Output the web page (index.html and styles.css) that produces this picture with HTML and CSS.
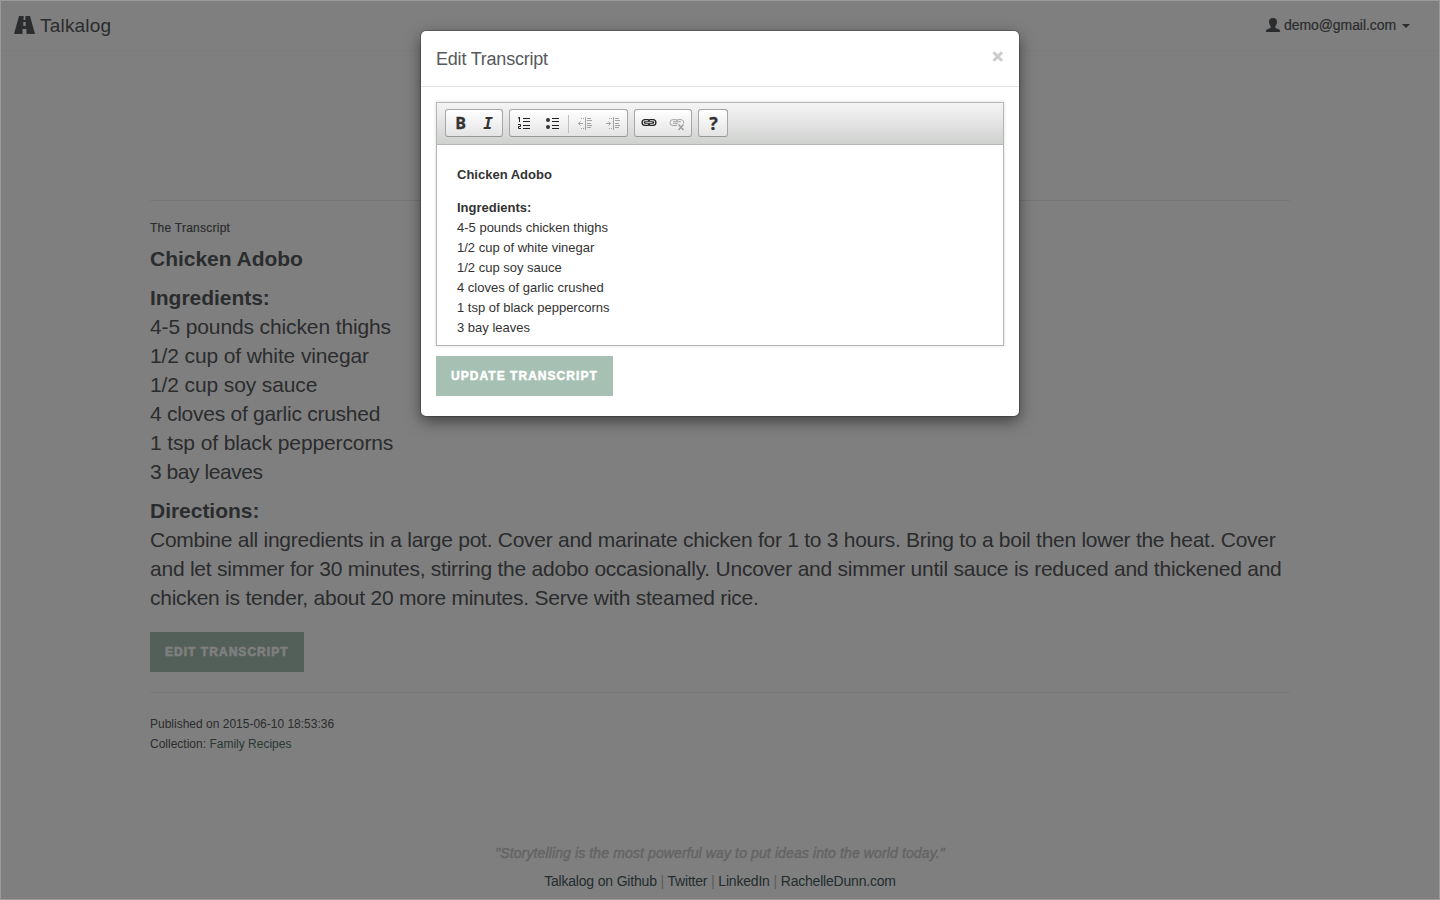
FILE: index.html
```html
<!DOCTYPE html>
<html lang="en">
<head>
<meta charset="utf-8">
<title>Talkalog</title>
<link rel="stylesheet" href="styles.css">
</head>
<body>
<div class="page">
  <nav class="navbar">
    <a class="brand">
      <svg class="road" width="21" height="18" viewBox="0 0 21 18"><path fill="currentColor" fill-rule="evenodd" d="M5 0h11l5 18h-8.500v-5H8.500v5H0zM9.600 0v4h1.800V0zM9.300 6v4h2.400V6z"/></svg>
      <span>Talkalog</span>
    </a>
    <a class="user">
      <svg width="14" height="14" viewBox="0 0 14 14"><path fill="currentColor" d="M7 0c2.800 0 4 1.500 4 3.800 0 2-.8 3.400-1.700 4.600v1c0 .5.2.7.7.9l2.800 1c.8.400 1.200.8 1.200 2.700H0c0-1.900.4-2.300 1.200-2.700l2.800-1c.5-.2.700-.4.700-.9v-1C3.800 7.200 3 5.800 3 3.800 3 1.500 4.200 0 7 0z"/></svg>
      <span class="email">demo@gmail.com</span>
      <span class="caret"></span>
    </a>
  </nav>

  <main class="container">
    <p class="label">The Transcript</p>
    <div class="transcript">
      <p><strong>Chicken Adobo</strong></p>
      <p><strong>Ingredients:</strong><br>4-5 pounds chicken thighs<br>1/2 cup of white vinegar<br>1/2 cup soy sauce<br><span class="snug">4 cloves of garlic crushed</span><br>1 tsp of black peppercorns<br><span class="tight">3 bay leaves</span></p>
      <p class="directions"><strong>Directions:</strong><br><span class="snug">Combine all ingredients in a large pot. Cover and marinate chicken for 1 to 3 hours. Bring to a boil then lower the heat. Cover</span><br>and let simmer for 30 minutes, stirring the adobo occasionally. Uncover and simmer until sauce is reduced and thickened and<br>chicken is tender, about 20 more minutes. Serve with steamed rice.</p>
    </div>
    <button class="btn">Edit Transcript</button>
    <div class="meta">Published on 2015-06-10 18:53:36<br>Collection: <a>Family Recipes</a></div>
  </main>

  <footer class="footer">
    <p class="quote">"Storytelling is the most powerful way to put ideas into the world today."</p>
    <p class="links"><a>Talkalog on Github</a> | <a>Twitter</a> | <a>LinkedIn</a> | <a>RachelleDunn.com</a></p>
  </footer>

  <div class="backdrop">
    <section class="modal">
      <header class="modal-header">
        <h4>Edit Transcript</h4>
        <svg class="close" width="12" height="11" viewBox="0 0 12 11"><path d="M1.500 1.200l8.500 8.600M10 1.200L1.500 9.800" stroke="#ccc" stroke-width="3"/></svg>
      </header>
      <div class="modal-body">
        <div class="editor">
          <div class="toolbar">
            <div class="group">
              <span class="tool bold">B</span>
              <span class="tool italic">I</span>
            </div>
            <div class="group">
              <span class="tool"><svg width="16" height="16" viewBox="0 0 16 16"><path fill="none" stroke="#222" d="M3.500 2v5M2 3h2M2 9.500h2.500v2h-2v2H5"/><path stroke="#222" d="M7 3.500h7M7 6.500h7M7 10.500h7M7 13.500h7"/></svg></span>
              <span class="tool"><svg width="16" height="16" viewBox="0 0 16 16"><circle cx="4" cy="5" r="2" fill="#333"/><circle cx="4" cy="12" r="2" fill="#333"/><path stroke="#222" d="M8 3.500h7M8 6.500h7M8 10.500h7M8 13.500h7"/></svg></span>
              <span class="separator"></span>
              <span class="tool disabled"><svg width="16" height="16" viewBox="0 0 16 16"><path fill="none" stroke="#444" d="M8.500 2v13M10 3.500h4M10 5.500h5M10 8.500h4M10 10.500h5M10 12.500h4M1 8.500h5M3.500 6.500l-2 2 2 2M4 3.500h1M6 3.500h1M4 13.500h1M6 13.500h1"/></svg></span>
              <span class="tool disabled"><svg width="16" height="16" viewBox="0 0 16 16"><path fill="none" stroke="#444" d="M8.500 2v13M10 3.500h4M10 5.500h5M10 8.500h4M10 10.500h5M10 12.500h4M1 8.500h5M3.500 6.500l2 2-2 2M4 3.500h1M6 3.500h1M4 13.500h1M6 13.500h1"/></svg></span>
            </div>
            <div class="group">
              <span class="tool"><svg width="16" height="16" viewBox="0 0 16 16"><g fill="none"><g stroke="#222" stroke-width="1.300"><path d="M8.500 6.200A2 2 0 0 0 7 4.600H4a2.900 2.900 0 0 0 0 5.800h3a2 2 0 0 0 1.500-1.600M7.500 6.200A2 2 0 0 1 9 4.600h3a2.900 2.900 0 0 1 0 5.800H9a2 2 0 0 1-1.500-1.600"/></g><path d="M4 7.500h8" stroke="#222" stroke-width="2.400" stroke-linecap="round"/><path d="M4.500 7.500h7" stroke="#ddd" stroke-width=".8"/></g></svg></span>
              <span class="tool disabled"><svg width="16" height="16" viewBox="0 0 16 16"><g fill="none" stroke="#444"><path d="M8 10.500H4A2.900 2.900 0 0 1 4 4.600h3a2 2 0 0 1 1.500 1.600M7.500 6.200A2 2 0 0 1 9 4.600h3a2.900 2.900 0 0 1 2.500 4"/><path d="M4 6.700h8M4 8.400h5"/><path stroke-width="1.600" d="M9.500 9.500l5 5.500M14.500 9.500l-5 5.500"/></g></svg></span>
            </div>
            <div class="group">
              <span class="tool help">?</span>
            </div>
          </div>
          <div class="content">
            <p><strong>Chicken Adobo</strong></p>
            <p><strong>Ingredients:</strong><br>4-5 pounds chicken thighs<br>1/2 cup of white vinegar<br>1/2 cup soy sauce<br>4 cloves of garlic crushed<br>1 tsp of black peppercorns<br>3 bay leaves</p>
          </div>
        </div>
        <button class="btn">Update Transcript</button>
      </div>
    </section>
  </div>
</div>
</body>
</html>
```
FILE: styles.css
```css
* { box-sizing: border-box; }
body { margin: 0; background: #9a9a9a; font-family: "Liberation Sans", Arial, sans-serif; }
p, h4 { margin: 0; }

.page {
  position: relative;
  display: flex;
  flex-direction: column;
  width: 1438px;
  height: 898px;
  margin: 1px;
  background: #fff;
  color: #56595c;
  overflow: hidden;
}

.navbar {
  display: flex;
  justify-content: space-between;
  height: 50px;
  padding: 0 29px 0 13px;
  border-bottom: 1px solid #f8f8f8;
}
.brand, .user { display: flex; align-items: center; }
.brand { gap: 5px; padding-top: 1px; font-size: 19px; line-height: 20px; letter-spacing: .2px; }
.road { margin-top: -2px; }
.user { gap: 4px; padding-bottom: 1px; font-size: 14px; letter-spacing: -.07px; }
.user svg { margin-top: -1px; }
.email { -webkit-text-stroke: .2px; }
.caret { margin: 2px 0 0 2px; border: 4px solid transparent; border-top-color: currentColor; border-bottom: 0; }

.container {
  flex: 1;
  width: 1140px;
  margin: 149px 0 0 149px;
  border-top: 1px solid #eee;
}
.label { margin-top: 17px; font-size: 12px; line-height: 20px; letter-spacing: .25px; -webkit-text-stroke: .2px; }
.transcript { margin-top: 6px; font-size: 21px; line-height: 29px; letter-spacing: -.12px; white-space: nowrap; }
.transcript p { margin-bottom: 10px; }
.transcript strong { letter-spacing: -.03px; }
.transcript .directions { margin-bottom: 20px; letter-spacing: -.24px; }
.snug { letter-spacing: -.265px; }
.tight { letter-spacing: -.45px; }

.btn {
  display: block;
  height: 40px;
  padding: 0 15px;
  border: 0;
  background: #a7c0b4;
  color: #fff;
  font: bold 12px/40px "Liberation Sans", Arial, sans-serif;
  letter-spacing: 1.04px;
  text-transform: uppercase;
  white-space: nowrap;
  -webkit-text-stroke: .5px;
}
.meta { margin-top: 20px; padding-top: 21px; border-top: 1px solid #eee; font-size: 12px; line-height: 20px; }
.meta a { color: #52706a; }

.footer { padding-bottom: 8px; text-align: center; font-size: 14px; color: #b8b8b8; white-space: nowrap; }
.quote { line-height: 20px; margin-bottom: 8px; font-style: italic; letter-spacing: .12px; color: #c8c8c8; -webkit-text-stroke: .4px; }
.links { line-height: 20px; letter-spacing: -.2px; word-spacing: .1px; }
.links a { color: #485a5c; }

.backdrop {
  position: absolute;
  inset: 0;
  display: flex;
  align-items: flex-start;
  justify-content: center;
  padding-top: 30px;
  background: rgba(0, 0, 0, .5);
}
.modal { width: 598px; height: 385px; border-radius: 5px; background: #fff; box-shadow: 0 0 0 1px rgba(0, 0, 0, .2), 0 5px 15px rgba(0, 0, 0, .5); }
.modal-header {
  display: flex;
  justify-content: space-between;
  height: 56px;
  padding: 15px 15px 0 15px;
  border-bottom: 1px solid #e5e5e5;
}
.modal-header h4 { font-weight: normal; font-size: 18px; line-height: 26px; letter-spacing: -.21px; }
.close { margin-top: 5px; }
.modal-body { padding: 15px; }

.editor { height: 244px; margin-bottom: 10px; border: 1px solid #b6b6b6; box-shadow: 0 0 3px rgba(0, 0, 0, .15); overflow: hidden; }
.toolbar {
  display: flex;
  gap: 6px;
  height: 42px;
  padding: 6px 8px;
  border-bottom: 1px solid #b6b6b6;
  background: linear-gradient(#f5f5f5, #cfd1cf);
}
.group { display: flex; align-items: center; height: 28px; border: 1px solid #a6a6a6; border-bottom-color: #979797; border-radius: 3px; background: linear-gradient(#fff, #e4e4e4); }
.tool { display: flex; align-items: center; justify-content: center; width: 28px; height: 26px; color: #333; }
.tool.disabled { opacity: .45; }
.tool svg { margin-top: -1px; }
.bold { padding-left: 1px; font: bold 16px "Open Sans", sans-serif; -webkit-text-stroke: .3px; }
.italic { font: italic bold 16px "DejaVu Sans Mono", monospace; }
.help { padding-left: 1px; font: bold 18px "Open Sans", sans-serif; -webkit-text-stroke: .3px; }
.separator { width: 1px; height: 18px; margin: 2px 2px 0; background: #c0c0c0; }

.content { padding: 20px; font-size: 13px; line-height: 20px; color: #333; white-space: nowrap; }
.content p { margin-bottom: 13px; }
```
